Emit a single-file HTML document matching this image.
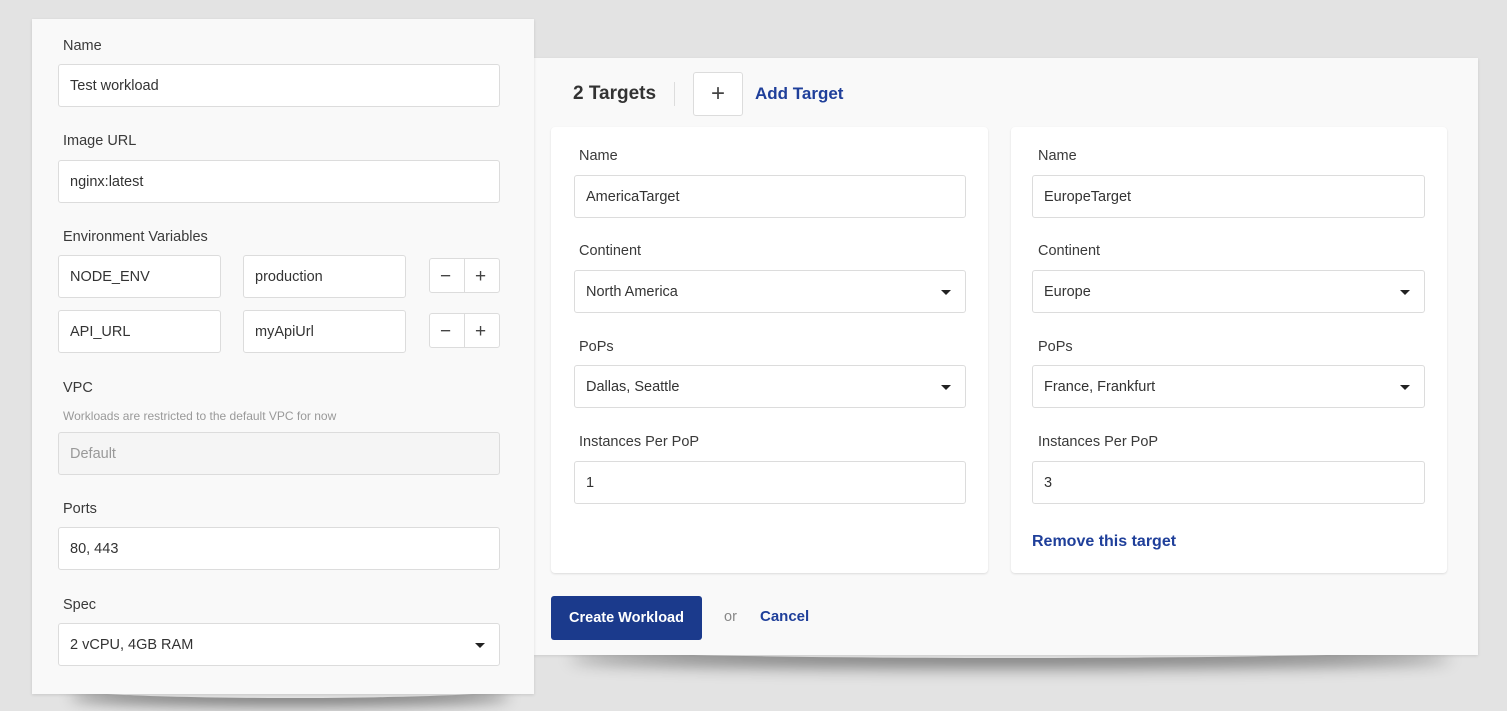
<!DOCTYPE html>
<html><head><style>
*{box-sizing:border-box;margin:0;padding:0}
body{width:1507px;height:711px;background:#e3e3e3;font-family:"Liberation Sans",Arial,sans-serif;position:relative;overflow:hidden;color:#333}
.a{position:absolute}
.panel{background:#f9f9f9}
.lbl{position:absolute;font-size:14.5px;color:#3a3a3a}
.in{position:absolute;background:#fff;border:1px solid #dcdcdc;border-radius:3px;height:43px;font-size:14.5px;color:#333;padding-left:11px;line-height:42px}
.dis{background:#f5f5f5;color:#999}
.car{position:absolute;right:14px;top:19px;width:0;height:0;border-left:5px solid transparent;border-right:5px solid transparent;border-top:5px solid #222}
.card{position:absolute;background:#fff;border-radius:4px;box-shadow:0 1px 2px rgba(0,0,0,.12)}
.btn2{position:absolute;width:71px;height:35px;border:1px solid #dcdcdc;border-radius:3px;background:#fff}
.btn2:after{content:"";position:absolute;left:34px;top:0;bottom:0;border-left:1px solid #dcdcdc}
.btn2 span{position:absolute;top:7px;font-size:19px;color:#444}
.link{position:absolute;color:#1f3f9a;font-weight:bold;font-size:16px}
</style></head><body>
<div class="a" style="left:70px;top:680px;width:440px;height:18px;border-radius:50%;box-shadow:0 8px 14px rgba(0,0,0,.45)"></div>
<div class="a" style="left:570px;top:638px;width:880px;height:20px;border-radius:50%;box-shadow:0 10px 16px rgba(0,0,0,.45)"></div>
<div class="a panel" style="left:534px;top:58px;width:944px;height:597px;box-shadow:0 1px 3px rgba(0,0,0,.1)"></div>
<div class="a panel" style="left:32px;top:19px;width:502px;height:675px;box-shadow:0 1px 3px rgba(0,0,0,.12)"></div>

<div class="lbl" style="left:63px;top:38px">Name</div>
<div class="in" style="left:58px;top:64px;width:442px">Test workload</div>
<div class="lbl" style="left:63px;top:133px">Image URL</div>
<div class="in" style="left:58px;top:160px;width:442px">nginx:latest</div>
<div class="lbl" style="left:63px;top:229px">Environment Variables</div>
<div class="in" style="left:58px;top:255px;width:163px">NODE_ENV</div>
<div class="in" style="left:243px;top:255px;width:163px">production</div>
<div class="btn2" style="left:429px;top:258px"><span style="left:10px">−</span><span style="left:45px">+</span></div>
<div class="in" style="left:58px;top:310px;width:163px">API_URL</div>
<div class="in" style="left:243px;top:310px;width:163px">myApiUrl</div>
<div class="btn2" style="left:429px;top:313px"><span style="left:10px">−</span><span style="left:45px">+</span></div>
<div class="lbl" style="left:63px;top:380px">VPC</div>
<div class="lbl" style="left:63px;top:409px;font-size:12px;color:#999">Workloads are restricted to the default VPC for now</div>
<div class="in dis" style="left:58px;top:432px;width:442px">Default</div>
<div class="lbl" style="left:63px;top:501px">Ports</div>
<div class="in" style="left:58px;top:527px;width:442px">80, 443</div>
<div class="lbl" style="left:63px;top:597px">Spec</div>
<div class="in" style="left:58px;top:623px;width:442px">2 vCPU, 4GB RAM<div class="car"></div></div>

<div class="a" style="left:573px;top:83px;font-size:19px;font-weight:bold;color:#333">2 Targets</div>
<div class="a" style="left:674px;top:82px;width:1px;height:24px;background:#ddd"></div>
<div class="a" style="left:693px;top:72px;width:50px;height:44px;border:1px solid #dcdcdc;border-radius:3px;background:#fff;text-align:center;font-size:24px;line-height:42px;color:#444">+</div>
<div class="link" style="left:755px;top:84px;font-size:17px">Add Target</div>

<div class="card" style="left:551px;top:127px;width:437px;height:446px"></div>
<div class="card" style="left:1011px;top:127px;width:436px;height:446px"></div>

<div class="lbl" style="left:579px;top:148px">Name</div>
<div class="in" style="left:574px;top:175px;width:392px">AmericaTarget</div>
<div class="lbl" style="left:579px;top:243px">Continent</div>
<div class="in" style="left:574px;top:270px;width:392px">North America<div class="car"></div></div>
<div class="lbl" style="left:579px;top:339px">PoPs</div>
<div class="in" style="left:574px;top:365px;width:392px">Dallas, Seattle<div class="car"></div></div>
<div class="lbl" style="left:579px;top:434px">Instances Per PoP</div>
<div class="in" style="left:574px;top:461px;width:392px">1</div>

<div class="lbl" style="left:1038px;top:148px">Name</div>
<div class="in" style="left:1032px;top:175px;width:393px">EuropeTarget</div>
<div class="lbl" style="left:1038px;top:243px">Continent</div>
<div class="in" style="left:1032px;top:270px;width:393px">Europe<div class="car"></div></div>
<div class="lbl" style="left:1038px;top:339px">PoPs</div>
<div class="in" style="left:1032px;top:365px;width:393px">France, Frankfurt<div class="car"></div></div>
<div class="lbl" style="left:1038px;top:434px">Instances Per PoP</div>
<div class="in" style="left:1032px;top:461px;width:393px">3</div>
<div class="link" style="left:1032px;top:533px">Remove this target</div>

<div class="a" style="left:551px;top:596px;width:151px;height:44px;background:#1b3a8c;border-radius:3px;color:#fff;font-weight:bold;font-size:14.5px;text-align:center;line-height:44px">Create Workload</div>
<div class="a" style="left:724px;top:609px;font-size:14.5px;color:#888">or</div>
<div class="link" style="left:760px;top:608px;font-size:15px">Cancel</div>
</body></html>
